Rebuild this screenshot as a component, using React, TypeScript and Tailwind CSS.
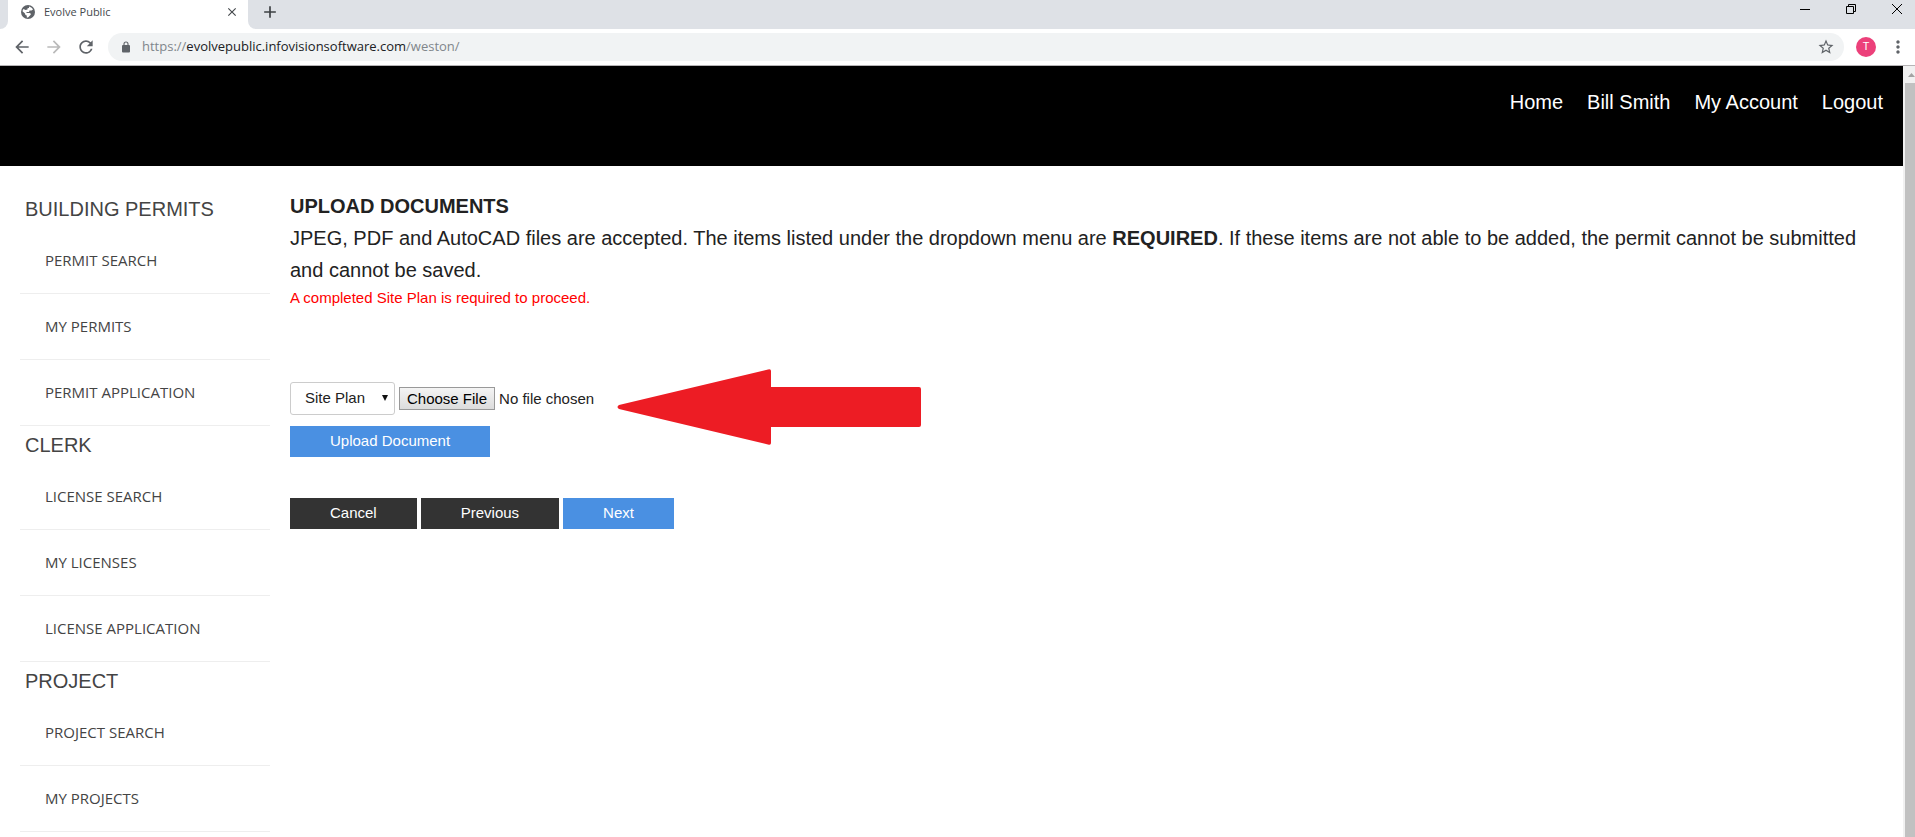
import type React from "react"
import { MdAdd, MdArrowBack, MdArrowForward, MdClose, MdMoreVert, MdRefresh, MdStarBorder } from "react-icons/md"

interface MenuSection {
  title: string
  items: string[]
}

const menuSections: MenuSection[] = [
  { title: "BUILDING PERMITS", items: ["PERMIT SEARCH", "MY PERMITS", "PERMIT APPLICATION"] },
  { title: "CLERK", items: ["LICENSE SEARCH", "MY LICENSES", "LICENSE APPLICATION"] },
  { title: "PROJECT", items: ["PROJECT SEARCH", "MY PROJECTS"] },
]

const navLinks = ["Home", "Bill Smith", "My Account", "Logout"]

const TabStrip: React.FC = () => (
  <div className="flex h-[29px] shrink-0 bg-white">
    <div className="w-2 rounded-br-lg bg-[#dee1e6]" />
    <div className="flex h-6 w-60 items-center pl-3 pr-2">
      <svg className="h-4 w-4" viewBox="0 0 16 16">
        <circle cx="8" cy="8" r="7" fill="#5f6368" />
        <path
          d="M9 2.600C10.500 3 12 3.800 13 5.500L11.500 6.500H9.500L9 8H6.500V9H9.500C10.500 9 11 9.800 10.800 10.500L9.500 12L8 13.600H6.800V11.500C5.500 11.300 5 10.500 5 9.500L2.500 7.200C2.600 6.400 3 5.500 3.500 5L5.500 6L7.500 5.500V4.200L9 4z"
          fill="#fff"
        />
      </svg>
      <span className="ml-2 flex-1 text-[11px] text-[#45494d]">Evolve Public</span>
      <button aria-label="Close tab" className="flex h-4 w-4 items-center justify-center text-[#45494d]">
        <MdClose className="h-3.5 w-3.5" />
      </button>
    </div>
    <div className="flex flex-1 justify-between rounded-bl-lg bg-[#dee1e6] pl-3">
      <button aria-label="New tab" className="mt-0.5 flex h-5 w-5 items-center justify-center text-[#3c4043]">
        <MdAdd className="h-5 w-5" />
      </button>
      <div className="flex h-[18px] items-center gap-9 pr-[13px] text-black">
        <button aria-label="Minimize">
          <svg className="h-2.5 w-2.5" viewBox="0 0 10 10" fill="none" stroke="currentColor">
            <path d="M0 5.5h10" />
          </svg>
        </button>
        <button aria-label="Restore">
          <svg className="h-2.5 w-2.5" viewBox="0 0 10 10" fill="none" stroke="currentColor">
            <path d="M.5 2.5h7v7h-7zM2.5 2.5v-2h7v7h-2" />
          </svg>
        </button>
        <button aria-label="Close">
          <svg className="h-2.5 w-2.5" viewBox="0 0 10 10" fill="none" stroke="currentColor">
            <path d="M0 0l10 10M10 0L0 10" />
          </svg>
        </button>
      </div>
    </div>
  </div>
)

const Toolbar: React.FC = () => (
  <div className="flex h-[37px] shrink-0 items-center border-b border-[#b6b4b6] bg-white pl-3 pr-[7px] text-[#5f6368]">
    <div className="flex gap-3">
      <button aria-label="Back">
        <MdArrowBack className="h-5 w-5" />
      </button>
      <button aria-label="Forward" className="text-[#bababa]">
        <MdArrowForward className="h-5 w-5" />
      </button>
      <button aria-label="Reload">
        <MdRefresh className="h-5 w-5" />
      </button>
    </div>
    <div className="ml-3 flex h-7 flex-1 items-center rounded-full bg-[#f1f3f4] pl-3.5 pr-[9px]">
      <svg className="h-3 w-2" viewBox="0 0 8 12">
        <rect y="4" width="8" height="7.500" rx="1" fill="#5f6368" />
        <path d="M2 4.500V3a2 2 0 0 1 4 0v1.500" fill="none" stroke="#5f6368" strokeWidth="1.100" />
      </svg>
      <a href="#" className="ml-3 flex-1 text-[13px] text-[#80868b]">
        https://<span className="text-[#202124]">evolvepublic.infovisionsoftware.com</span>/weston/
      </a>
      <button aria-label="Bookmark this page">
        <MdStarBorder className="h-[18px] w-[18px]" />
      </button>
    </div>
    <button className="ml-3 flex h-5 w-5 items-center justify-center rounded-full bg-[#ec407a] font-[Roboto] text-[11px] text-white">
      T
    </button>
    <button aria-label="Menu" className="ml-3">
      <MdMoreVert className="h-5 w-5" />
    </button>
  </div>
)

const Sidebar: React.FC = () => (
  <nav className="w-[250px] shrink-0 pt-6 text-[#444]">
    {menuSections.map((section) => (
      <section key={section.title}>
        <h2 className="pl-[5px] text-xl leading-[38px]">{section.title}</h2>
        <ul>
          {section.items.map((item) => (
            <li key={item} className="border-b border-[#eee]">
              <a href="#" className="block pl-[25px] font-['Open_Sans',sans-serif] text-[15px] leading-[65px]">
                {item}
              </a>
            </li>
          ))}
        </ul>
      </section>
    ))}
  </nav>
)

const UploadDocuments: React.FC = () => (
  <main className="flex-1 pl-5 pr-[30px] pt-6 text-[#222]">
    <h1 className="text-xl font-bold leading-8">UPLOAD DOCUMENTS</h1>
    <p className="text-xl leading-8">
      JPEG, PDF and AutoCAD files are accepted. The items listed under the dropdown menu are <strong>REQUIRED</strong>. If
      these items are not able to be added, the permit cannot be submitted and cannot be saved.
    </p>
    <p className="text-[15px] leading-6 text-[#f00]">A completed Site Plan is required to proceed.</p>

    <form className="pt-[72px] text-[15px]">
      {/* File picker */}
      <div className="relative flex items-center gap-1">
        <div className="relative">
          <select
            aria-label="Document type"
            className="block h-[33px] w-[105px] appearance-none rounded-[3px] border border-[#ccc] bg-white pl-3.5"
          >
            <option>Site Plan</option>
          </select>
          <svg className="pointer-events-none absolute right-[7px] top-[13px] h-[6px] w-[6px]" viewBox="0 0 6 6">
            <path d="M0 0h6L3 6z" fill="#111" />
          </svg>
        </div>
        <input
          type="file"
          aria-label="Document file"
          className="w-52 file:mr-1 file:h-[23px] file:border file:border-solid file:border-[#999] file:bg-linear-to-b file:from-[#f4f4f4] file:to-[#dcdcdc] file:px-[7px] file:text-[15px] file:text-black"
        />
        {/* Callout arrow drawn over the form */}
        <svg
          className="pointer-events-none absolute -top-[13px] left-[327px] h-[76px] w-[304px]"
          viewBox="0 0 304 76"
          fill="#ed1c24"
        >
          <path d="M2 36L151 .5Q154 -.5 154 2V18H302Q304 18 304 20V56Q304 58 302 58H154V74Q154 76.500 151 75.500L2 40Q-1 38 2 36z" />
        </svg>
      </div>
      <button type="button" className="mt-[11px] block h-[31px] bg-[#4a90e2] px-10 text-white">
        Upload Document
      </button>

      {/* Wizard steps */}
      <div className="mt-[41px] flex gap-1 text-white">
        <button type="button" className="h-[31px] bg-[#333] px-10">
          Cancel
        </button>
        <button type="button" className="h-[31px] bg-[#333] px-10">
          Previous
        </button>
        <button type="button" className="h-[31px] bg-[#4a90e2] px-10">
          Next
        </button>
      </div>
    </form>
  </main>
)

const App: React.FC = () => {
  return (
    <div className="flex h-screen flex-col overflow-hidden bg-white font-['Open_Sans',sans-serif]">
      <TabStrip />
      <Toolbar />
      <div className="flex min-h-0 flex-1">
        <div className="flex-1 overflow-hidden font-['Liberation_Sans',Arial,sans-serif]">
          <header className="h-[100px] bg-black pr-5 pt-5">
            <nav className="flex justify-end gap-6 text-xl leading-8 text-white">
              {navLinks.map((link) => (
                <a key={link} href="#">
                  {link}
                </a>
              ))}
            </nav>
          </header>
          <div className="flex pl-5">
            <Sidebar />
            <UploadDocuments />
          </div>
        </div>
        {/* Scrollbar */}
        <div className="flex w-3 flex-col bg-[#f1f1f1] pl-0.5">
          <div className="flex h-[17px] shrink-0 items-center justify-end">
            <svg className="h-1 w-[7px]" viewBox="0 0 7 4">
              <path d="M0 4L3.500 0L7 4z" fill="#a3a3a3" />
            </svg>
          </div>
          <div className="flex-1 bg-[#c1c1c1]" />
        </div>
      </div>
    </div>
  )
}

export default App
